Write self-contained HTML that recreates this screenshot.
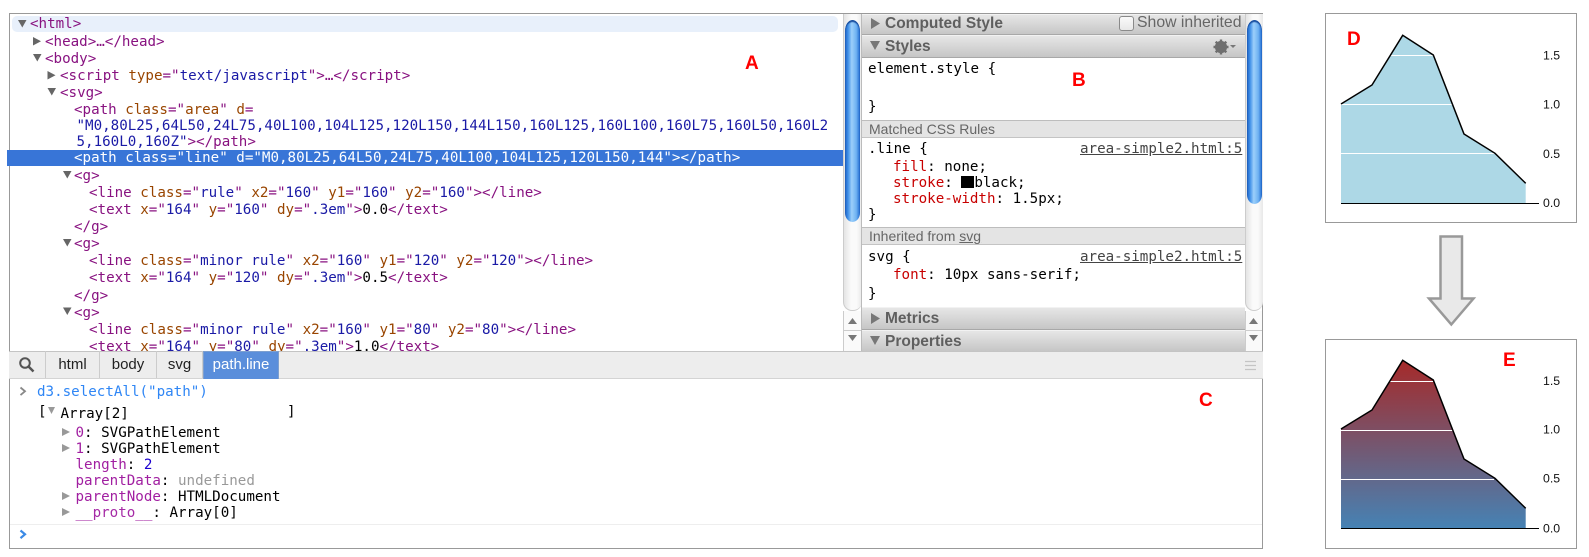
<!DOCTYPE html>
<html><head><meta charset="utf-8"><style>
html,body{margin:0;padding:0;background:#fff;width:1589px;height:557px;overflow:hidden}
body{position:relative;font-family:"Liberation Sans",sans-serif}
.a{position:absolute}
.r{position:absolute;white-space:pre;font:14.2px/17px "DejaVu Sans Mono","Liberation Mono",monospace;color:#000;margin-top:-7.500px}
.t{color:#881280}.n{color:#994500}.v{color:#1a1aa6}.k{color:#c80000}.p{color:#a11fa1}
.h{position:absolute;left:862px;width:383px;background:linear-gradient(#e6e6e6,#c6c6c6);border-top:1px solid #f2f2f2;border-bottom:1px solid #a8a8a8;box-sizing:border-box;font-weight:bold;font-size:15.5px;color:#5f5f5f;padding-left:23px;white-space:pre}
.s{position:absolute;left:862px;width:383px;background:#e4e4e4;border-top:1px solid #bdbdbd;border-bottom:1px solid #c4c4c4;box-sizing:border-box;font-size:14px;color:#666;padding-left:7px;white-space:pre}
.tb{position:absolute;top:351px;height:27px;border-right:1px solid #ccc;font-size:15px;line-height:28px;text-align:center;color:#222;box-sizing:border-box}
.l{position:absolute;font:bold 19px "Liberation Sans",sans-serif;color:#f00;line-height:20px}
.tr{position:absolute;border-left:1px solid #ccc;background:linear-gradient(90deg,#e4e4e4,#fafafa 40%,#fafafa 70%,#e8e8e8)}
.th{position:absolute;background:linear-gradient(90deg,#1c5fc0,#3f8fe8 20%,#9ccffa 45%,#6fb2f2 75%,#1f6ad0);border-radius:8px 8px 8px 8px/12px 12px 10px 10px;box-shadow:inset 0 2px 1px #1a4f9f}
.link{text-decoration:underline;color:#444}
</style></head><body>

<!-- DOM pane -->
<div class="a" style="left:9px;top:13px;width:1254px;height:536px;border:1px solid #999;box-sizing:border-box"></div>
<div class="a" style="left:12px;top:16px;width:826px;height:16px;background:#e8f0fb;border-radius:5px"></div>
<div class="a" style="left:7px;top:150px;width:836px;height:16px;background:#3875d7"></div>

<div class="r t" style="left:30px;top:23px">&lt;html&gt;</div>
<div class="r t" style="left:45px;top:41px">&lt;head&gt;…&lt;/head&gt;</div>
<div class="r t" style="left:45px;top:58px">&lt;body&gt;</div>
<div class="r t" style="left:60px;top:75px">&lt;script <span class="n">type</span>="<span class="v">text/javascript</span>"&gt;…&lt;/script&gt;</div>
<div class="r t" style="left:60px;top:92px">&lt;svg&gt;</div>
<div class="r t" style="left:74px;top:109px">&lt;path <span class="n">class</span>="<span class="n">area</span>" <span class="n">d</span>=</div>
<div class="r v" style="left:76.500px;top:125px">"M0,80L25,64L50,24L75,40L100,104L125,120L150,144L150,160L125,160L100,160L75,160L50,160L2</div>
<div class="r v" style="left:76.500px;top:141px">5,160L0,160Z"<span class="t">&gt;&lt;/path&gt;</span></div>
<div class="r" style="left:74px;top:157.500px;color:#fff">&lt;path class="line" d="M0,80L25,64L50,24L75,40L100,104L125,120L150,144"&gt;&lt;/path&gt;</div>
<div class="r t" style="left:74px;top:175px">&lt;g&gt;</div>
<div class="r t" style="left:89px;top:192px">&lt;line <span class="n">class</span>="<span class="v">rule</span>" <span class="n">x2</span>="<span class="v">160</span>" <span class="n">y1</span>="<span class="v">160</span>" <span class="n">y2</span>="<span class="v">160</span>"&gt;&lt;/line&gt;</div>
<div class="r t" style="left:89px;top:209px">&lt;text <span class="n">x</span>="<span class="v">164</span>" <span class="n">y</span>="<span class="v">160</span>" <span class="n">dy</span>="<span class="v">.3em</span>"&gt;<span style="color:#000">0.0</span>&lt;/text&gt;</div>
<div class="r t" style="left:74px;top:226px">&lt;/g&gt;</div>
<div class="r t" style="left:74px;top:243px">&lt;g&gt;</div>
<div class="r t" style="left:89px;top:260px">&lt;line <span class="n">class</span>="<span class="v">minor rule</span>" <span class="n">x2</span>="<span class="v">160</span>" <span class="n">y1</span>="<span class="v">120</span>" <span class="n">y2</span>="<span class="v">120</span>"&gt;&lt;/line&gt;</div>
<div class="r t" style="left:89px;top:277px">&lt;text <span class="n">x</span>="<span class="v">164</span>" <span class="n">y</span>="<span class="v">120</span>" <span class="n">dy</span>="<span class="v">.3em</span>"&gt;<span style="color:#000">0.5</span>&lt;/text&gt;</div>
<div class="r t" style="left:74px;top:295px">&lt;/g&gt;</div>
<div class="r t" style="left:74px;top:312px">&lt;g&gt;</div>
<div class="r t" style="left:89px;top:329px">&lt;line <span class="n">class</span>="<span class="v">minor rule</span>" <span class="n">x2</span>="<span class="v">160</span>" <span class="n">y1</span>="<span class="v">80</span>" <span class="n">y2</span>="<span class="v">80</span>"&gt;&lt;/line&gt;</div>
<div class="r t" style="left:89px;top:346px">&lt;text <span class="n">x</span>="<span class="v">164</span>" <span class="n">y</span>="<span class="v">80</span>" <span class="n">dy</span>="<span class="v">.3em</span>"&gt;<span style="color:#000">1.0</span>&lt;/text&gt;</div>

<!-- scrollbars -->
<div class="tr" style="left:843px;top:14px;width:18px;height:296px;border-radius:0 0 9px 9px;border-bottom:1px solid #ccc"></div>
<div class="th" style="left:845px;top:20px;width:15px;height:202px"></div>
<div class="a" style="left:843px;top:311px;width:18px;height:40px;background:#fafafa;border-left:1px solid #ccc;box-sizing:border-box"></div>
<div class="a" style="left:844px;top:330px;width:17px;height:1px;background:#ccc"></div>
<div class="tr" style="left:1245px;top:14px;width:17px;height:296px;border-radius:0 0 9px 9px;border-bottom:1px solid #ccc"></div>
<div class="th" style="left:1247px;top:20px;width:15px;height:184px"></div>
<div class="a" style="left:1245px;top:311px;width:17px;height:40px;background:#fafafa;border-left:1px solid #ccc;box-sizing:border-box"></div>
<div class="a" style="left:1246px;top:330px;width:16px;height:1px;background:#ccc"></div>

<!-- sidebar -->
<div class="a" style="left:861px;top:14px;width:1px;height:337px;background:#bbb"></div>
<div class="h" style="top:14px;height:21px;line-height:18px">Computed Style</div>
<div class="a" style="left:1119px;top:16px;width:13px;height:13px;border:1px solid #8a8a8a;border-radius:3px;background:linear-gradient(#fafafa,#e8e8e8)"></div>
<div class="a" style="left:1137px;top:14px;font-size:15.800px;line-height:18px;color:#666;white-space:pre">Show inherited</div>
<div class="h" style="top:35px;height:23px;line-height:22px">Styles</div>
<div class="r" style="left:868px;top:68px">element.style {</div>
<div class="r" style="left:868px;top:106px">}</div>
<div class="s" style="top:120px;height:18px;line-height:17px">Matched CSS Rules</div>
<div class="r" style="left:868px;top:148px">.line {</div>
<div class="r link" style="left:1080px;top:148px">area-simple2.html:5</div>
<div class="r" style="left:893px;top:166px"><span class="k">fill</span>: none;</div>
<div class="r" style="left:893px;top:182px"><span class="k">stroke</span>: <span style="display:inline-block;width:13px;height:12px;background:#000;vertical-align:-1px"></span>black;</div>
<div class="r" style="left:893px;top:198px"><span class="k">stroke-width</span>: 1.5px;</div>
<div class="r" style="left:868px;top:214px">}</div>
<div class="s" style="top:227px;height:18px;line-height:17px">Inherited from <span style="text-decoration:underline">svg</span></div>
<div class="r" style="left:868px;top:256px">svg {</div>
<div class="r link" style="left:1080px;top:256px">area-simple2.html:5</div>
<div class="r" style="left:893px;top:274px"><span class="k">font</span>: 10px sans-serif;</div>
<div class="r" style="left:868px;top:293px">}</div>
<div class="h" style="top:307px;height:23px;line-height:22px">Metrics</div>
<div class="h" style="top:330px;height:21px;line-height:22px;overflow:hidden;border-bottom:0">Properties</div>

<!-- toolbar -->
<div class="a" style="left:9px;top:351px;width:1254px;height:28px;background:#ededed;border-top:1px solid #c4c4c4;border-bottom:1px solid #d4d4d4;box-sizing:border-box"></div>
<div class="tb" style="left:45px;width:55px;border-left:1px solid #ccc">html</div>
<div class="tb" style="left:100px;width:57px">body</div>
<div class="tb" style="left:157px;width:46px">svg</div>
<div class="tb" style="left:203px;width:76px;background:#5a8edb;color:#fff;border:1px solid #7d9fcf;border-bottom:0;line-height:26px;height:28px">path.line</div>

<!-- console -->
<div class="r" style="left:37px;top:391px;color:#2f86f5">d3.selectAll("path")</div>
<div class="r" style="left:38px;top:411px">[</div>
<div class="r" style="left:60.500px;top:413px">Array[2]</div>
<div class="r" style="left:287px;top:411px">]</div>
<div class="r" style="left:75.500px;top:432px"><span class="p">0</span>: SVGPathElement</div>
<div class="r" style="left:75.500px;top:448px"><span class="p">1</span>: SVGPathElement</div>
<div class="r" style="left:75.500px;top:464px"><span class="p">length</span>: <span style="color:#1c00cf">2</span></div>
<div class="r" style="left:75.500px;top:480px"><span class="p">parentData</span>: <span style="color:#999">undefined</span></div>
<div class="r" style="left:75.500px;top:496px"><span class="p">parentNode</span>: HTMLDocument</div>
<div class="r" style="left:75.500px;top:512px"><span class="p" style="opacity:.95">__proto__</span>: Array[0]</div>
<div class="a" style="left:10px;top:524px;width:1252px;height:1px;background:#eee"></div>

<!-- graphics -->
<svg class="a" style="left:0;top:0" width="1589" height="557" viewBox="0 0 1589 557" font-family="Liberation Sans,sans-serif">
<defs>
<linearGradient id="g" x1="0" y1="361" x2="0" y2="528" gradientUnits="userSpaceOnUse"><stop offset="0" stop-color="#a52a2a"/><stop offset="1" stop-color="#4682b4"/></linearGradient>
</defs>
<!-- triangles -->
<g fill="#666">
<path d="M18 20h8.500l-4.200 7.500z"/>
<path d="M33 37v8.500l8-4.200z"/>
<path d="M33 54h8.500l-4.200 7.500z"/>
<path d="M47.500 71v8.500l8-4.200z"/>
<path d="M47.500 88h8.500l-4.200 7.500z"/>
<path d="M63 171h8.500l-4.200 7.500z"/>
<path d="M63 239h8.500l-4.200 7.500z"/>
<path d="M63 307.500h8.500l-4.200 7.500z"/>
</g>
<g fill="#777">
<path d="M871 18v11l9-5.500z"/>
<path d="M870 41h10l-5 9z"/>
<path d="M871 313v11l9-5.500z"/>
<path d="M870 336h10l-5 9z"/>
</g>
<g fill="#777">
<path d="M848 324l4.500-6 4.500 6z"/><path d="M848 335l4.500 6 4.500-6z"/>
<path d="M1249 324l4.500-6 4.500 6z"/><path d="M1249 335l4.500 6 4.500-6z"/>
</g>
<g fill="#999">
<path d="M62 428v8l8-4z"/><path d="M62 444v8l8-4z"/>
<path d="M62 492v8l8-4z"/><path d="M62 508v8l8-4z"/>
<path d="M48 407h7l-3.500 7z"/>
</g>
<!-- gear -->
<g fill="none" stroke="#6f6f6f">
<circle cx="1221" cy="47" r="4.200" stroke-width="3.800"/>
<path d="M1221 39.500v15M1213.500 47h15M1215.700 41.700l10.600 10.600M1226.300 41.700l-10.600 10.600" stroke-width="2.400"/>
</g>
<path d="M1230 45h6l-3 3z" fill="#777"/>
<!-- search icon -->
<circle cx="25" cy="363" r="4.800" fill="none" stroke="#555" stroke-width="2"/>
<path d="M28.500 366.500l5 5" stroke="#555" stroke-width="2.500"/>
<!-- toolbar grip -->
<path d="M1245 361.500h11M1245 365.500h11M1245 369.500h11" stroke="#c4c4c4" stroke-width="1.200"/>
<!-- console prompts -->
<path d="M20.500 387.500l4.500 3.800-4.500 3.800" fill="none" stroke="#888" stroke-width="1.800"/>
<path d="M20.500 530.500l4.500 3.800-4.500 3.800" fill="none" stroke="#3b8ae6" stroke-width="2.200"/>

<!-- chart D -->
<rect x="1325.500" y="13.500" width="251" height="209" fill="#fff" stroke="#999"/>
<path d="M1341 104L1372 85L1402.700 35.300L1433.300 55L1464 134L1495 153.300L1525.700 183.300V203.300H1341Z" fill="#add8e6"/>
<path d="M1389.500 55.500H1433M1341 104.500H1454M1341 153.500H1494" stroke="#fff" stroke-width="1"/>
<path d="M1341 104L1372 85L1402.700 35.300L1433.300 55L1464 134L1495 153.300L1525.700 183.300" fill="none" stroke="#000" stroke-width="1.500"/>
<path d="M1341 203.500H1539" stroke="#000" stroke-width="1"/>
<g font-size="12.300" fill="#111">
<text x="1543" y="59.500">1.5</text><text x="1543" y="108.500">1.0</text><text x="1543" y="158">0.5</text><text x="1543" y="207">0.0</text>
</g>
<!-- arrow -->
<path d="M1440.500 236.500H1462V298.500H1473.500L1451.300 324.500L1429 298.500H1440.500Z" fill="#e9e9e9" stroke="#999" stroke-width="2.500"/>
<!-- chart E -->
<rect x="1325.500" y="339.500" width="251" height="209" fill="#fff" stroke="#999"/>
<path d="M1341 429L1372 410L1402.700 360.300L1433.300 380L1464 459L1495 478.300L1525.700 508.300V528.300H1341Z" fill="url(#g)"/>
<path d="M1389.500 381.500H1433M1341 430.500H1454M1341 479.500H1494" stroke="#fff" stroke-width="1"/>
<path d="M1341 429L1372 410L1402.700 360.300L1433.300 380L1464 459L1495 478.300L1525.700 508.300" fill="none" stroke="#000" stroke-width="1.500"/>
<path d="M1341 528.500H1539" stroke="#000" stroke-width="1"/>
<g font-size="12.300" fill="#111">
<text x="1543" y="385">1.5</text><text x="1543" y="433.500">1.0</text><text x="1543" y="482.500">0.5</text><text x="1543" y="532.500">0.0</text>
</g>
</svg>

<!-- labels -->
<div class="l" style="left:745px;top:54px">A</div>
<div class="l" style="left:1072px;top:71px">B</div>
<div class="l" style="left:1199px;top:391px">C</div>
<div class="l" style="left:1347px;top:30px">D</div>
<div class="l" style="left:1503px;top:351px">E</div>
</body></html>
